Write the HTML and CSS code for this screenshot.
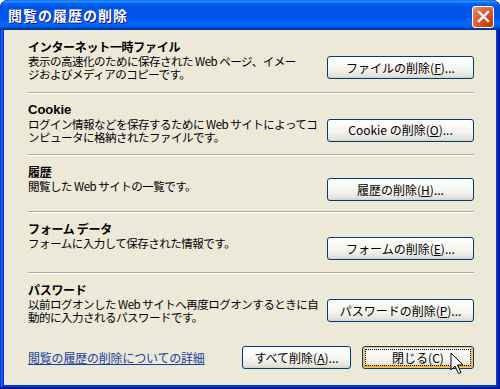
FILE: index.html
```html
<!DOCTYPE html>
<html lang="ja">
<head>
  <meta charset="UTF-8" />
  <title>閲覧の履歴の削除</title>
  <link rel="stylesheet" href="styles.css">
</head>
<body>
  <div class="window">
    <div class="titlebar">
      <span class="title">閲覧の履歴の削除</span>
      <span class="close-x">
        <svg width="13" height="13" viewBox="0 0 13 13"><path d="M2 2 L11 11 M11 2 L2 11" stroke="#fff" stroke-width="2.4" stroke-linecap="square"/></svg>
      </span>
    </div>
    <div class="client">

      <!-- Temporary files -->
      <div class="section s1">
        <div class="info">
          <div class="head">インターネット一時ファイル</div>
          <div class="desc">表示の高速化のために保存された Web ページ、イメー<br>ジおよびメディアのコピーです。</div>
        </div>
        <button class="btn">ファイルの削除(<u>F</u>)...</button>
      </div>

      <!-- Cookie -->
      <div class="section s2">
        <div class="info">
          <div class="head head-latin">Cookie</div>
          <div class="desc">ログイン情報などを保存するために Web サイトによってコ<br>ンピュータに格納されたファイルです。</div>
        </div>
        <button class="btn">Cookie の削除(<u>O</u>)...</button>
      </div>

      <!-- History -->
      <div class="section s3">
        <div class="info">
          <div class="head">履歴</div>
          <div class="desc">閲覧した Web サイトの一覧です。</div>
        </div>
        <button class="btn">履歴の削除(<u>H</u>)...</button>
      </div>

      <!-- Form data -->
      <div class="section s4">
        <div class="info">
          <div class="head">フォーム データ</div>
          <div class="desc">フォームに入力して保存された情報です。</div>
        </div>
        <button class="btn">フォームの削除(<u>E</u>)...</button>
      </div>

      <!-- Passwords -->
      <div class="section s5 last">
        <div class="info">
          <div class="head">パスワード</div>
          <div class="desc">以前ログオンした Web サイトへ再度ログオンするときに自<br>動的に入力されるパスワードです。</div>
        </div>
        <button class="btn">パスワードの削除(<u>P</u>)...</button>
      </div>

      <div class="footer">
        <a class="more" href="#">閲覧の履歴の削除についての詳細</a>
        <div class="footer-buttons">
          <button class="btn btn-all">すべて削除(<u>A</u>)...</button>
          <button class="btn btn-close"><span class="focus">閉じる(C)</span></button>
        </div>
      </div>
    </div>

    <!-- mouse pointer -->
    <svg class="cursor" width="14" height="24" viewBox="0 0 14 24">
      <path d="M1 1 L1 18 L5 14 L8.5 21.5 L11 20.5 L7.5 13 L13 13 Z" fill="#fff" stroke="#000" stroke-width="1" stroke-linejoin="miter"/>
    </svg>
  </div>
</body>
</html>
```

FILE: styles.css
```css
* { box-sizing: border-box; }
body {
  margin: 0;
  background: #fff;
  font-family: "Noto Sans CJK JP", "Noto Sans", sans-serif;
  font-size: 12px;
  color: #000;
}
.window {
  position: relative;
  width: 500px;
  height: 389px;
  display: flex;
  flex-direction: column;
  background: #0831d9;
  border-radius: 8px 8px 0 0;
  padding: 0 4px 4px;
  box-shadow: inset -1px -1px #00138c, inset 1px 1px #0831d9,
              inset -2px -2px #001ea0, inset 2px 2px #166aee,
              inset -3px -3px #003bda, inset 3px 3px #0855dd;
  overflow: hidden;
}
.titlebar {
  height: 30px;
  margin: 0 -4px;
  padding: 0 6px 0 8px;
  display: flex;
  align-items: center;
  justify-content: space-between;
  border-radius: 8px 8px 0 0;
  background: linear-gradient(#0058ee 0%, #3593ff 4%, #288eff 6%, #127dff 8%,
    #036ffc 10%, #0262ee 14%, #0057e5 20%, #0054e3 24%, #0055eb 56%,
    #005bf5 66%, #026afe 76%, #0062ef 86%, #0052d6 92%, #0040ab 94%, #003092 100%);
}
.title {
  color: #fff;
  font-weight: bold;
  font-size: 14px;
  letter-spacing: 1px;
  text-shadow: 1px 1px #0f1089;
  margin-top: -1px;
}
.close-x {
  width: 22px;
  height: 22px;
  margin-top: 3px;
  border: 1px solid #fff;
  border-radius: 3px;
  display: flex;
  align-items: center;
  justify-content: center;
  background: radial-gradient(circle at 85% 85%, #c8360c 0%, #d9552d 50%, #e5805f 85%, #f3b8a2 100%);
}
.client {
  flex: 1;
  background: #ece9d8;
  padding: 0 22px 0 24px;
  display: flex;
  flex-direction: column;
}
.section {
  display: flex;
  justify-content: space-between;
  align-items: flex-start;
  padding-top: 10px;
  border-bottom: 1px solid #aca899;
  box-shadow: 0 1px #fff;
}
.s1 { height: 63px; }
.s2 { height: 62px; }
.s3 { height: 57px; }
.s4 { height: 61px; }
.s5 { height: 62px; }
.section.last {
  border-bottom: none;
  box-shadow: none;
}
.info {
  flex: 1;
  min-width: 0;
  white-space: nowrap;
}
.head {
  font-weight: bold;
  line-height: 14px;
  margin-bottom: 1px;
  letter-spacing: -0.3px;
}
.head-latin {
  font-family: "Liberation Sans", "Noto Sans CJK JP", sans-serif;
  font-size: 13px;
  letter-spacing: 0;
}
.desc {
  font-size: 11.5px;
  line-height: 13px;
  letter-spacing: -0.5px;
}
.btn {
  font-family: inherit;
  font-size: 12px;
  color: #000;
  width: 147px;
  height: 23px;
  padding: 0;
  line-height: 20px;
  border: 1px solid #003c74;
  border-radius: 3px;
  background: linear-gradient(#fff, #f4f4f0 60%, #e3e2da 90%, #d6d0c5);
  flex-shrink: 0;
}
.section .btn {
  align-self: center;
  margin-top: 3px;
}
.btn u { text-decoration: underline; }
.footer {
  display: flex;
  justify-content: space-between;
  align-items: center;
  margin-top: 11px;
}
.more {
  color: #1b3c9f;
  text-decoration: underline;
  letter-spacing: -0.2px;
}
.footer-buttons {
  display: flex;
  gap: 11px;
}
.btn-all { width: 109px; }
.btn-close {
  width: 112px;
  padding: 2px;
  box-shadow: inset 0 0 0 1px #f9c35a, inset 0 -1px 0 2px #f5b13a;
}
.focus {
  display: block;
  height: 17px;
  line-height: 15px;
  border: 1px dotted #000;
}
.cursor {
  position: absolute;
  left: 450px;
  top: 352px;
}
```
